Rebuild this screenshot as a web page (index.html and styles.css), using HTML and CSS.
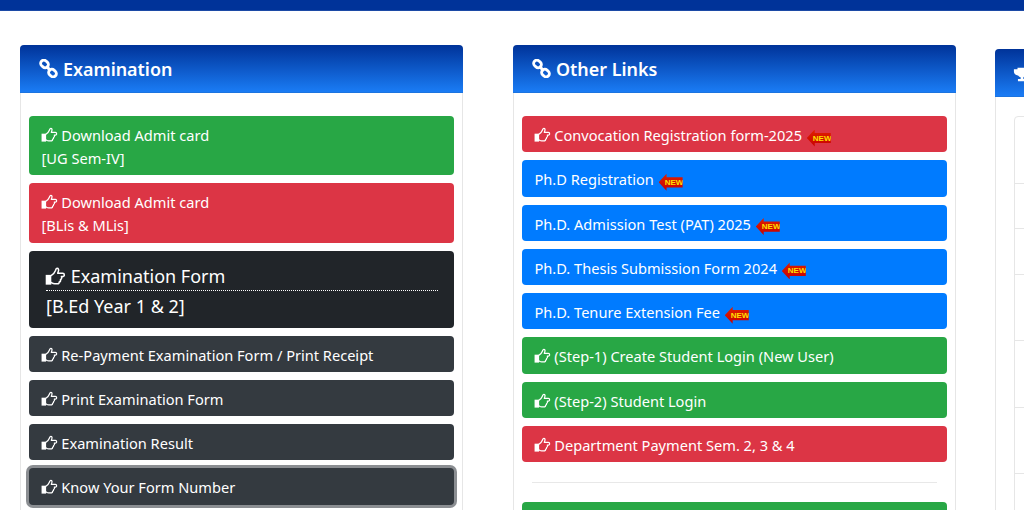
FILE: index.html
```html
<!DOCTYPE html>
<html>
<head>
  <title>Student Portal</title>
  <link rel="stylesheet" href="styles.css">
</head>
<body>
  <svg class="icon-defs" width="0" height="0">
    <symbol id="hand" viewBox="0 0 18 16">
      <path fill="none" stroke="currentColor" stroke-width="1.300" stroke-linejoin="round" stroke-linecap="round" d="M5.200 7.200c1.800-1 3.200-2.800 3.800-4.400.3-.9.400-1.900 1.400-1.900 1.200 0 1.500 1.300 1.100 2.500l-.6 1.900h4.300c1.800 0 1.800 2.800 0 2.800h-1.100c.5 1.200 0 2.200-.8 2.500.2 1.100-.3 1.900-1.100 2.100.1 1-.6 1.600-1.500 1.600H8.300c-1.200 0-2.100-.6-3.100-1.200"/>
      <path fill="currentColor" d="M.6 6.600h4.800v8.400H.6z"/>
    </symbol>
    <symbol id="link" viewBox="0 0 20 20">
      <g fill="none" stroke="currentColor" stroke-width="3">
        <rect x="1.500" y="1.800" width="8.600" height="6.800" rx="3.400" transform="rotate(42 5.800 5.200)"/>
        <rect x="9.900" y="11.400" width="8.600" height="6.800" rx="3.400" transform="rotate(42 14.200 14.800)"/>
        <path d="M7.500 7.500l5 5"/>
      </g>
    </symbol>
  </svg>

  <div class="topbar"></div>

  <div class="columns">
    <div class="card">
      <div class="card-header">
        <svg class="head-icon"><use href="#link"/></svg> Examination
      </div>
      <div class="card-body">
        <a class="btn green"><svg class="hand"><use href="#hand"/></svg> Download Admit card<br>[UG Sem-IV]</a>
        <a class="btn red"><svg class="hand"><use href="#hand"/></svg> Download Admit card<br>[BLis &amp; MLis]</a>
        <a class="btn black btn-lg">
          <span class="lg-title"><svg class="hand hand-lg"><use href="#hand"/></svg> Examination Form</span>
          [B.Ed Year 1 &amp; 2]
        </a>
        <a class="btn dark"><svg class="hand"><use href="#hand"/></svg> Re-Payment Examination Form / Print Receipt</a>
        <a class="btn dark"><svg class="hand"><use href="#hand"/></svg> Print Examination Form</a>
        <a class="btn dark"><svg class="hand"><use href="#hand"/></svg> Examination Result</a>
        <a class="btn dark focus"><svg class="hand"><use href="#hand"/></svg> Know Your Form Number</a>
      </div>
    </div>

    <div class="card">
      <div class="card-header">
        <svg class="head-icon"><use href="#link"/></svg> Other Links
      </div>
      <div class="card-body">
        <a class="btn red"><svg class="hand"><use href="#hand"/></svg> Convocation Registration form-2025 <span class="new">NEW</span></a>
        <a class="btn blue">Ph.D Registration <span class="new">NEW</span></a>
        <a class="btn blue">Ph.D. Admission Test (PAT) 2025 <span class="new">NEW</span></a>
        <a class="btn blue">Ph.D. Thesis Submission Form 2024 <span class="new">NEW</span></a>
        <a class="btn blue">Ph.D. Tenure Extension Fee <span class="new">NEW</span></a>
        <a class="btn green"><svg class="hand"><use href="#hand"/></svg> (Step-1) Create Student Login (New User)</a>
        <a class="btn green"><svg class="hand"><use href="#hand"/></svg> (Step-2) Student Login</a>
        <a class="btn red"><svg class="hand"><use href="#hand"/></svg> Department Payment Sem. 2, 3 &amp; 4</a>
        <hr class="divider">
        <a class="btn green">&nbsp;</a>
      </div>
    </div>

    <div class="card card-side">
      <div class="card-header">
        <svg class="head-icon trophy" viewBox="0 0 20 20" preserveAspectRatio="none"><path fill="currentColor" d="M5 1h10v2h4v3c0 3-2 5-5 5.500-.5 1-1.500 1.500-2.500 2V16h3v3H5.500v-3h3v-2.500c-1-.5-2-1-2.500-2C3 11 1 9 1 6V3h4z"/></svg>
      </div>
      <div class="card-body">
        <ul class="list">
          <li class="tall"></li>
          <li class="short"></li>
          <li class="short"></li>
          <li class="tall"></li>
          <li class="tall"></li>
          <li class="tall"></li>
          <li class="tall"></li>
        </ul>
      </div>
    </div>
  </div>
</body>
</html>
```

FILE: styles.css
```css
html, body {
  height: 510px;
  overflow: hidden;
}

body {
  margin: 0;
  background: #fff;
  color: #212529;
  font-family: "Noto Sans", "Open Sans", sans-serif;
  font-size: 15px;
  line-height: 1.5;
}

.icon-defs {
  position: absolute;
}

.topbar {
  height: 10px;
  background: #003399;
  border-bottom: 1px solid #1c4aa6;
}

.columns {
  display: flex;
  gap: 50px;
  padding: 34px 0 0 20px;
}

.card {
  flex: 0 0 443px;
  box-sizing: border-box;
  border: 1px solid #e6e6e6;
  border-radius: 4px;
  background: #fff;
}

.card-side {
  margin-top: 4px;
  margin-left: -11px;
}

.card-side .card-body {
  padding-top: 19px;
}

.card-header {
  display: flex;
  align-items: center;
  gap: 5px;
  height: 48px;
  box-sizing: border-box;
  padding: 2px 19px 0;
  margin: -1px -1px 0;
  border-radius: 4px 4px 0 0;
  border-bottom: 1px solid #1c74e0;
  background: linear-gradient(#003399, #1a7cf5);
  color: #fff;
  font-size: 17.900px;
  font-weight: 600;
}

.head-icon {
  width: 19px;
  height: 19px;
  margin-top: -2px;
}

.trophy {
  width: 18px;
  height: 15px;
  margin: 2px 0 0 -1px;
}

.card-body {
  padding: 23px 8px 0;
}

.btn {
  display: block;
  margin-bottom: 8px;
  padding: 8px 12.500px 5.300px;
  border-radius: 4px;
  color: #fff;
  font-size: 14.600px;
  line-height: 23px;
}

.hand {
  width: 17px;
  height: 16px;
  margin-left: -1px;
  vertical-align: -2px;
}

.hand-lg {
  width: 21px;
  height: 19px;
  vertical-align: -3px;
}

.green { background: #28a745; }
.red { background: #dc3545; }
.blue { background: #007bff; }
.dark { background: #343a40; }
.black { background: #212529; }

.btn-lg {
  padding: 11px 16px 7px 17px;
  font-size: 18px;
  line-height: 30px;
}

.lg-title {
  display: block;
  line-height: 28px;
  border-bottom: 1px dotted #fff;
}

.focus {
  box-shadow: 0 0 0 3px #8b8e92;
}

.new {
  display: inline-block;
  width: 24px;
  height: 17px;
  margin: -6px 0 -6px 1px;
  padding-left: 6px;
  box-sizing: border-box;
  vertical-align: 0.500px;
  background: linear-gradient(#e02000, #c80000);
  clip-path: polygon(0 50%, 33% 0, 33% 20%, 100% 20%, 100% 80%, 33% 80%, 33% 100%);
  color: #ffe000;
  font-family: "Liberation Sans", sans-serif;
  font-size: 8px;
  font-weight: 700;
  line-height: 17px;
}

.divider {
  margin: 20px 10px 19px;
  border: 0;
  border-top: 1px solid #e8e8e8;
}

.list {
  margin: 0 0 0 10px;
  padding: 0;
  list-style: none;
  border: 1px solid #e6e6e6;
  border-radius: 4px;
}

.list li {
  box-sizing: border-box;
  border-bottom: 1px solid #e6e6e6;
}

.list .tall { height: 66.500px; }
.list .short { height: 45.500px; }
```
